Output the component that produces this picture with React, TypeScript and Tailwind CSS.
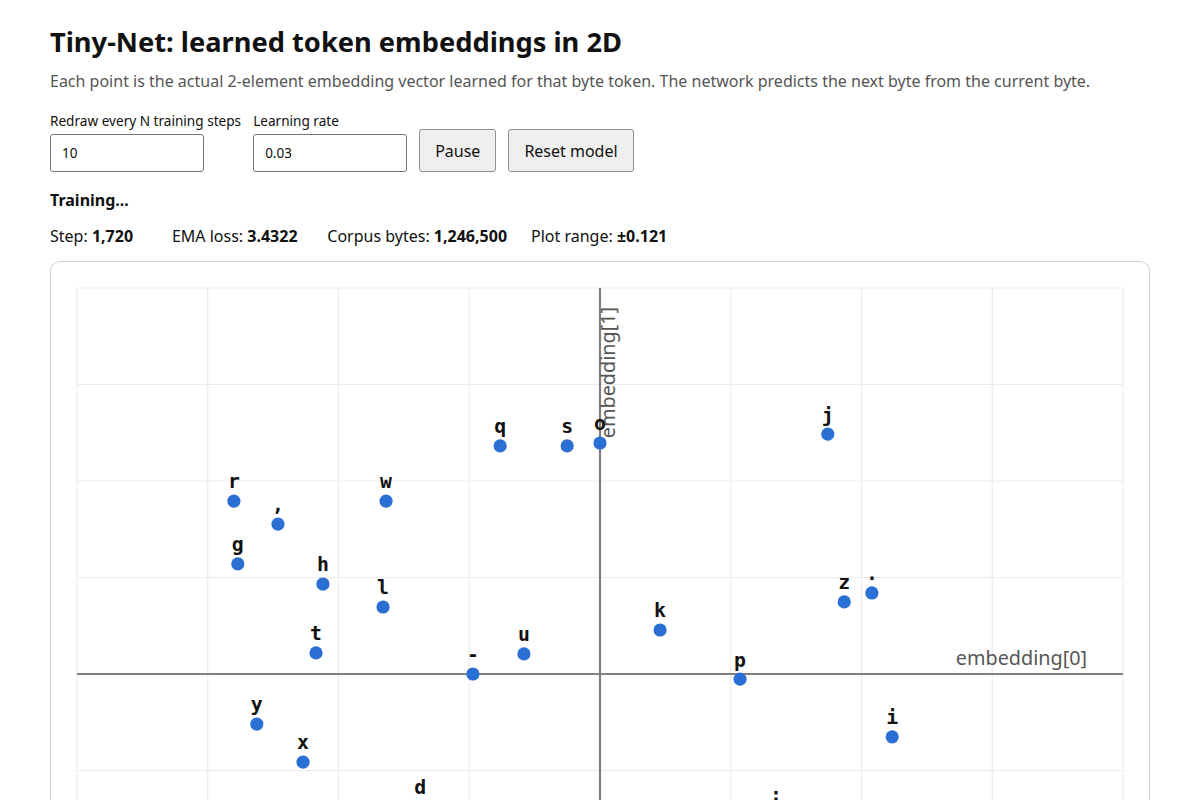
import React from 'react'

// learned 2-d embedding per byte token (snapshot of the current model)
const POINTS: { ch: string; e: [number, number] }[] = [
  { ch: 'r', e: [-0.0847, 0.0542] },
  { ch: ',', e: [-0.0745, 0.047] },
  { ch: 'g', e: [-0.0838, 0.0345] },
  { ch: 'h', e: [-0.0641, 0.0282] },
  { ch: 'w', e: [-0.0495, 0.0542] },
  { ch: 'l', e: [-0.0502, 0.021] },
  { ch: 't', e: [-0.0657, 0.0066] },
  { ch: 'q', e: [-0.0231, 0.0715] },
  { ch: 's', e: [-0.0076, 0.0715] },
  { ch: 'o', e: [0.0, 0.0724] },
  { ch: 'j', e: [0.0527, 0.0752] },
  { ch: 'k', e: [0.0139, 0.0138] },
  { ch: 'z', e: [0.0565, 0.0226] },
  { ch: '.', e: [0.0629, 0.0254] },
  { ch: 'u', e: [-0.0176, 0.0063] },
  { ch: '-', e: [-0.0294, 0.0] },
  { ch: 'p', e: [0.0324, -0.0016] },
  { ch: 'i', e: [0.0676, -0.0197] },
  { ch: 'y', e: [-0.0794, -0.0157] },
  { ch: 'x', e: [-0.0687, -0.0276] },
  { ch: 'd', e: [-0.0416, -0.0417] },
  { ch: ':', e: [0.0407, -0.0439] },
]

const RANGE = 0.121
const W = 1098
const H = 824
const PLOT = { x: 26, y: 26, w: 1046, h: 772 }
const CX = PLOT.x + PLOT.w / 2
const CY = PLOT.y + PLOT.h / 2
const toX = (v: number) => CX + (v / RANGE) * (PLOT.w / 2)
const toY = (v: number) => CY - (v / RANGE) * (PLOT.h / 2)

function EmbeddingPlot() {
  const cols = Array.from({ length: 9 }, (_, i) => PLOT.x + (i * PLOT.w) / 8)
  const rows = Array.from({ length: 9 }, (_, i) => PLOT.y + (i * PLOT.h) / 8)

  return (
    <svg width={W} height={H} viewBox={`0 0 ${W} ${H}`} className="block">
      {/* grid */}
      {cols.map((x) => (
        <line key={`c${x}`} x1={x} x2={x} y1={PLOT.y} y2={PLOT.y + PLOT.h} stroke="#ebebeb" strokeWidth={1.1} />
      ))}
      {rows.map((y) => (
        <line key={`r${y}`} x1={PLOT.x} x2={PLOT.x + PLOT.w} y1={y} y2={y} stroke="#ebebeb" strokeWidth={1.1} />
      ))}

      {/* axes */}
      <line x1={PLOT.x} x2={PLOT.x + PLOT.w} y1={CY} y2={CY} stroke="#808080" strokeWidth={2.2} />
      <line x1={CX} x2={CX} y1={PLOT.y} y2={PLOT.y + PLOT.h} stroke="#808080" strokeWidth={2.2} />

      <text x={PLOT.x + PLOT.w - 36} y={CY - 9} textAnchor="end" fontFamily="Noto Sans, sans-serif" fontSize={19.8} fill="#555">
        embedding[0]
      </text>
      <text
        transform={`translate(${CX + 15} ${PLOT.y + 19}) rotate(-90)`}
        textAnchor="end"
        fontFamily="Noto Sans, sans-serif"
        fontSize={19.8}
        fill="#555"
      >
        embedding[1]
      </text>

      {/* tokens */}
      {POINTS.map(({ ch, e }) => {
        const x = toX(e[0])
        const y = toY(e[1])
        return (
          <g key={ch}>
            <circle cx={x} cy={y} r={6.6} fill="#2a6fd4" />
            <text x={x} y={y - 12.6} textAnchor="middle" fontFamily="DejaVu Sans Mono, monospace" fontWeight="bold" fontSize={19.8} fill="#111">
              {ch}
            </text>
          </g>
        )
      })}
    </svg>
  )
}

const STATS = [
  { label: 'Step', value: '1,720' },
  { label: 'EMA loss', value: '3.4322' },
  { label: 'Corpus bytes', value: '1,246,500' },
  { label: 'Plot range', value: '±0.121' },
]

export default function App() {
  return (
    <div className="min-h-screen bg-white px-[50px] pt-[24px] font-['Noto_Sans',sans-serif] text-[#111]">
      <h1 className="text-[27.25px] font-bold leading-[36px]">Tiny-Net: learned token embeddings in 2D</h1>
      <p className="mt-[10px] text-[16px] leading-[22px] text-[#555]">
        Each point is the actual 2-element embedding vector learned for that byte token. The network predicts the next
        byte from the current byte.
      </p>

      {/* Controls */}
      <div className="mt-[20px] flex items-end gap-3">
        <label className="flex flex-col gap-[4px]">
          <span className="text-[13.6px] leading-[18px]">Redraw every N training steps</span>
          <input
            defaultValue="10"
            className="h-[38px] w-[154px] rounded-[3px] border border-[#767676] bg-white pl-[11px] text-[13.5px] text-[#111] outline-none"
          />
        </label>
        <label className="flex flex-col gap-[4px]">
          <span className="text-[13.6px] leading-[18px]">Learning rate</span>
          <input
            defaultValue="0.03"
            className="h-[38px] w-[154px] rounded-[3px] border border-[#767676] bg-white pl-[11px] text-[13.5px] text-[#111] outline-none"
          />
        </label>
        <button className="h-[43px] rounded-[3px] border border-[#8f8f8f] bg-[#efefef] px-[15px] text-[16px] text-[#111]">
          Pause
        </button>
        <button className="h-[43px] rounded-[3px] border border-[#8f8f8f] bg-[#efefef] px-[15px] text-[16px] text-[#111]">
          Reset model
        </button>
      </div>

      <div className="mt-[17px] text-[16px] font-bold leading-[22px]">Training...</div>

      {/* Stats */}
      <div className="mt-[14px] flex gap-6 text-[16px] leading-[22px]">
        {STATS.map((s) => (
          <span key={s.label}>
            {s.label}: <b className="inline-block min-w-[56px] font-bold">{s.value}</b>
          </span>
        ))}
      </div>

      <div className="mt-[14px] overflow-hidden rounded-[10px] border border-[#d0d0d0] bg-white">
        <EmbeddingPlot />
      </div>
    </div>
  )
}
